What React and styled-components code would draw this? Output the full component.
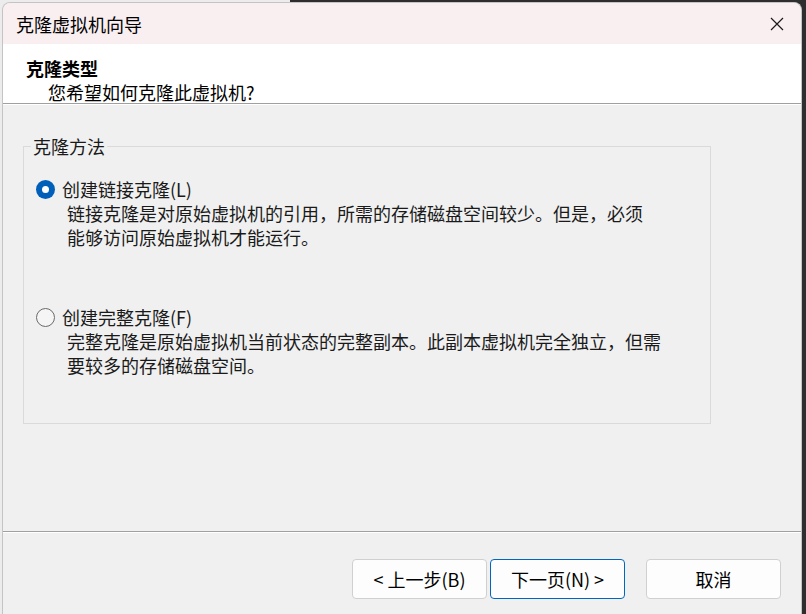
import React from "react";
import styled, { createGlobalStyle } from "styled-components";

const Global = createGlobalStyle`
  html, body { margin: 0; padding: 0; }
  body {
    width: 806px;
    height: 614px;
    overflow: hidden;
    background: linear-gradient(to right, #ececec 0, #ececec 290px, #2e2e2e 290px);
    font-family: "Noto Sans CJK SC", "Noto Sans", sans-serif;
  }
  #root { padding: 2px 0 0 2px; }
`;

const Window = styled.div`
  width: 800px;
  height: 612px;
  box-sizing: border-box;
  border: 1px solid #c4c4c4;
  border-bottom: none;
  border-radius: 8px 8px 0 0;
  overflow: hidden;
  display: flex;
  flex-direction: column;
  background: #f0f0f0;
`;

const TitleBar = styled.div`
  height: 41px;
  flex: none;
  display: flex;
  align-items: center;
  justify-content: space-between;
  background: #f9eef0;
  padding-left: 13px;
`;

const TitleText = styled.div`
  font-size: 18px;
  color: #000;
  line-height: 24px;
`;

const CloseBtn = styled.div`
  width: 48px;
  height: 41px;
  display: flex;
  align-items: center;
  justify-content: center;
`;

const Header = styled.div`
  height: 60px;
  flex: none;
  box-sizing: border-box;
  background: #fff;
  padding: 12px 0 0 23px;
  border-bottom: 1px solid #a0a0a0;
  box-shadow: 0 1px 0 #ffffff;
  margin-bottom: 1px;
`;

const HeaderTitle = styled.div`
  font-size: 18px;
  font-weight: 700;
  line-height: 24px;
  color: #000;
`;

const HeaderSub = styled.div`
  font-size: 18px;
  line-height: 24px;
  color: #000;
  padding-left: 22px;
`;

const Body = styled.div`
  flex: 1;
  padding: 29px 0 0 20px;
`;

const Group = styled.fieldset`
  width: 688px;
  box-sizing: border-box;
  margin: 0;
  min-inline-size: 0;
  border: 1px solid #dadada;
  padding: 19px 0 46px 7px;
`;

const Legend = styled.legend`
  padding: 0 2px;
  font-size: 18px;
  line-height: 24px;
  color: #1a1a1a;
`;

const Option = styled.div`
  margin-left: 5px;
  margin-top: ${(p) => (p.$first ? "0" : "56px")};
`;

const OptionRow = styled.div`
  display: flex;
  align-items: center;
  height: 24px;
`;

const Radio = styled.span`
  width: 19px;
  height: 19px;
  box-sizing: border-box;
  border-radius: 50%;
  flex: none;
  display: flex;
  align-items: center;
  justify-content: center;
  background: ${(p) => (p.$checked ? "#005fb8" : "#f5f5f5")};
  border: ${(p) => (p.$checked ? "none" : "1px solid #6a6a6a")};
  &::after {
    content: "";
    display: ${(p) => (p.$checked ? "block" : "none")};
    width: 7px;
    height: 7px;
    border-radius: 50%;
    background: #fff;
  }
`;

const OptionLabel = styled.span`
  margin-left: 7px;
  font-size: 18px;
  line-height: 24px;
  color: #1a1a1a;
`;

const Desc = styled.div`
  margin-left: 31px;
  font-size: 18px;
  line-height: 24px;
  color: #1a1a1a;
  white-space: nowrap;
`;

const Footer = styled.div`
  height: 83px;
  flex: none;
  box-sizing: border-box;
  border-top: 1px solid #a0a0a0;
  box-shadow: inset 0 1px 0 #ffffff;
  display: flex;
  justify-content: flex-end;
  align-items: flex-start;
  padding: 27px 20px 0 0;
`;

const Button = styled.button`
  width: 135px;
  height: 40px;
  box-sizing: border-box;
  margin-left: ${(p) => p.$gap || 0}px;
  border: 1px solid ${(p) => (p.$primary ? "#0067c0" : "#d0d0d0")};
  border-radius: 4px;
  background: #fdfdfd;
  font-family: "Noto Sans CJK SC", "Noto Sans", sans-serif;
  font-size: 18px;
  color: #000;
  padding: 0;
  line-height: 24px;
`;

export default function App() {
  return (
    <>
      <Global />
      <Window>
        <TitleBar>
          <TitleText>克隆虚拟机向导</TitleText>
          <CloseBtn>
            <svg width="14" height="14" viewBox="0 0 14 14">
              <path d="M1 1L13 13M13 1L1 13" stroke="#1a1a1a" strokeWidth="1.2" fill="none" />
            </svg>
          </CloseBtn>
        </TitleBar>
        <Header>
          <HeaderTitle>克隆类型</HeaderTitle>
          <HeaderSub>您希望如何克隆此虚拟机?</HeaderSub>
        </Header>
        <Body>
          <Group>
            <Legend>克隆方法</Legend>
            <Option $first>
              <OptionRow>
                <Radio $checked />
                <OptionLabel>创建链接克隆(L)</OptionLabel>
              </OptionRow>
              <Desc>
                链接克隆是对原始虚拟机的引用，所需的存储磁盘空间较少。但是，必须
                <br />
                能够访问原始虚拟机才能运行。
              </Desc>
            </Option>
            <Option>
              <OptionRow>
                <Radio />
                <OptionLabel>创建完整克隆(F)</OptionLabel>
              </OptionRow>
              <Desc>
                完整克隆是原始虚拟机当前状态的完整副本。此副本虚拟机完全独立，但需
                <br />
                要较多的存储磁盘空间。
              </Desc>
            </Option>
          </Group>
        </Body>
        <Footer>
          <Button>&lt; 上一步(B)</Button>
          <Button $primary $gap={3}>下一页(N) &gt;</Button>
          <Button $gap={21}>取消</Button>
        </Footer>
      </Window>
    </>
  );
}
